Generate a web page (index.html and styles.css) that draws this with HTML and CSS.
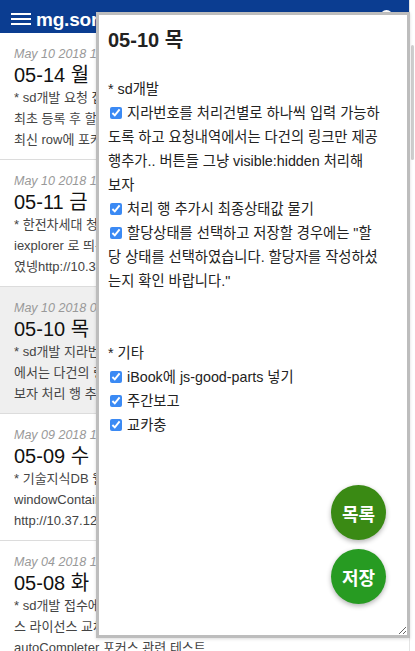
FILE: index.html
```html
<!DOCTYPE html>
<html lang="ko">
<head>
<meta charset="utf-8">
<title>mg.sori</title>
<link rel="stylesheet" href="styles.css">
</head>
<body>
<div class="app">
  <header class="topbar">
    <svg class="menu-icon" width="20" height="14" viewBox="0 0 20 14" aria-hidden="true">
      <path d="M0 1h20M0 6h20M0 11h20" stroke="#fff" stroke-width="2"/>
    </svg>
    <span class="brand">mg.sori</span>
    <svg class="search-icon" width="18" height="18" viewBox="0 0 18 18" aria-hidden="true">
      <circle cx="7.5" cy="7.5" r="5.5" fill="none" stroke="#fff" stroke-width="2"/>
      <path d="M11.5 11.5l5 5" stroke="#fff" stroke-width="2.4" stroke-linecap="round"/>
    </svg>
  </header>

  <ul class="list">
    <li class="entry">
      <div class="date">May 10 2018 14:31:06 GMT+0900</div>
      <div class="title">05-14 월</div>
      <p class="desc">* sd개발 요청 접수 화면 수정<br>최초 등록 후 할당자 지정 확인<br>최신 row에 포커스 이동 처리</p>
    </li>
    <li class="entry">
      <div class="date">May 10 2018 14:12:40 GMT+0900</div>
      <div class="title">05-11 금</div>
      <p class="desc">* 한전차세대 청구 화면 확인 중<br>iexplorer 로 띄워야 하는 거<br>였넹http://10.37.12.1:8080</p>
    </li>
    <li class="entry active">
      <div class="date">May 10 2018 09:05:21 GMT+0900</div>
      <div class="title">05-10 목</div>
      <p class="desc">* sd개발 지라번호를 처리건별로 하나씩 입력 가능하도록 하고 요청내역<br>에서는 다건의 링크만 제공 행추가.. 버튼들 그냥 visible:hidden 처리해<br>보자 처리 행 추가시 최종상태값 물기</p>
    </li>
    <li class="entry">
      <div class="date">May 09 2018 17:48:33 GMT+0900</div>
      <div class="title">05-09 수</div>
      <p class="desc">* 기술지식DB 웹 에디터 확인<br>windowContainer 관련 수정<br>http://10.37.12.3:8080</p>
    </li>
    <li class="entry">
      <div class="date">May 04 2018 18:02:17 GMT+0900</div>
      <div class="title">05-08 화</div>
      <p class="desc">* sd개발 접수에 대한 오픈소<br>스 라이선스 교체 검토<br>autoCompleter 포커스 관련 테스트</p>
    </li>
  </ul>
</div>

<div class="scroll-thumb"></div>

<section class="editor">
  <h2 class="editor-title">05-10 목</h2>
  <div class="editor-body">
    <div class="line blank"></div>
    <div class="line">* sd개발</div>
    <div class="line"><input type="checkbox" checked>지라번호를 처리건별로 하나씩 입력 가능하<br>도록 하고 요청내역에서는 다건의 링크만 제공<br>행추가.. 버튼들 그냥 visible:hidden 처리해<br>보자</div>
    <div class="line"><input type="checkbox" checked>처리 행 추가시 최종상태값 물기</div>
    <div class="line"><input type="checkbox" checked>할당상태를 선택하고 저장할 경우에는 "할<br>당 상태를 선택하였습니다. 할당자를 작성하셨<br>는지 확인 바랍니다."</div>
    <div class="line blank"></div>
    <div class="line blank"></div>
    <div class="line">* 기타</div>
    <div class="line"><input type="checkbox" checked>iBook에 js-good-parts 넣기</div>
    <div class="line"><input type="checkbox" checked>주간보고</div>
    <div class="line"><input type="checkbox" checked>교카충</div>
  </div>
</section>

<button class="fab fab-list" type="button">목록</button>
<button class="fab fab-save" type="button">저장</button>
</body>
</html>
```

FILE: styles.css
```css
* {
  box-sizing: border-box;
}

html, body {
  margin: 0;
  padding: 0;
  background: #fff;
}

body {
  width: 415px;
  height: 651px;
  overflow: hidden;
  position: relative;
  font-family: "Liberation Sans", "Noto Sans CJK KR", sans-serif;
  color: #222;
}

.app {
  width: 410px;
  border-right: 1px solid #e4e4e4;
  min-height: 651px;
}

.topbar {
  height: 33px;
  background: #0b3d91;
  display: flex;
  align-items: center;
  padding: 6px 12px 0 11px;
  gap: 5px;
}

.menu-icon {
  flex: none;
}

.brand {
  color: #fff;
  font-weight: bold;
  font-size: 19px;
  line-height: 24px;
  letter-spacing: -0.2px;
}

.search-icon {
  margin-left: auto;
  margin-top: -4px;
}

.list {
  list-style: none;
  margin: 0;
  padding: 0;
}

.entry {
  padding: 12px 14px 9px;
  border-bottom: 1px solid #dcdcdc;
  height: 127px;
  overflow: hidden;
}

.entry.active {
  background: #efefef;
}

.date {
  font-size: 12.5px;
  line-height: 18px;
  font-style: italic;
  color: #999;
  white-space: nowrap;
}

.title {
  font-size: 20px;
  line-height: 24px;
  color: #111;
  white-space: nowrap;
}

.desc {
  margin: 0;
  font-size: 13px;
  line-height: 21px;
  color: #444;
  white-space: nowrap;
  height: 63px;
  overflow: hidden;
}

.scroll-thumb {
  position: absolute;
  right: 1px;
  top: 45px;
  width: 3px;
  height: 115px;
  border-radius: 2px;
  background: #cfcfcf;
}

.editor {
  position: absolute;
  left: 96px;
  top: 12px;
  width: 314px;
  height: 626px;
  border: 3px solid #bdbdbd;
  background: #fff;
  padding: 12px 9px;
  resize: both;
  overflow: hidden;
  box-shadow: 0 1px 3px rgba(0, 0, 0, 0.15);
}

.editor-title {
  margin: 0;
  font-size: 20px;
  line-height: 26px;
  font-weight: bold;
  color: #222;
}

.editor-body {
  font-size: 14.3px;
  line-height: 24px;
  color: #222;
}

.line {
  white-space: nowrap;
}

.line.blank {
  height: 24px;
}

.line input[type="checkbox"] {
  width: 12px;
  height: 12px;
  margin: 0 5px 0 2px;
  vertical-align: -1px;
  accent-color: #3b8af4;
}

.fab {
  position: absolute;
  left: 331px;
  width: 55px;
  height: 55px;
  border: none;
  border-radius: 50%;
  color: #fff;
  font-family: "Liberation Sans", "Noto Sans CJK KR", sans-serif;
  font-size: 18px;
  font-weight: bold;
  padding: 0;
  box-shadow: 0 2px 5px rgba(0, 0, 0, 0.3);
}

.fab-list {
  top: 485px;
  background: #3a8a14;
}

.fab-save {
  top: 549px;
  background: #279b22;
}
```
